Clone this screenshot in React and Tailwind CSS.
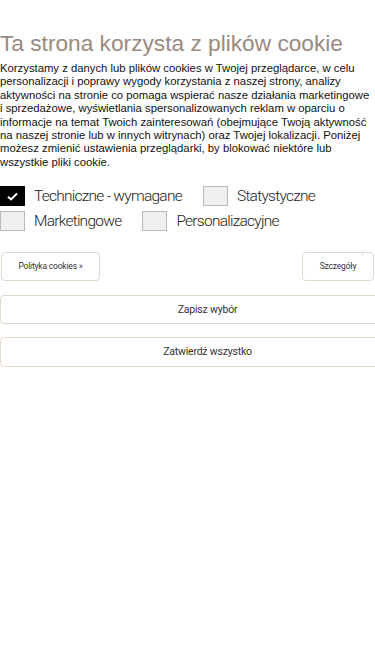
import React, { useState } from 'react';

const cond = { fontFamily: 'Roboto, "Noto Sans", sans-serif' };

const Box = ({ checked, onClick }) => (
  <button
    type="button"
    onClick={onClick}
    className={`flex h-[20px] w-[25px] shrink-0 items-center justify-center border ${
      checked ? 'border-black bg-black' : 'border-[#b9b9b9] bg-[#efefef]'
    }`}
  >
    {checked && (
      <svg viewBox="0 0 12 10" className="h-[9px] w-[11px]">
        <path d="M1 5.2 L4.4 8.3 L11 1.6" fill="none" stroke="#fff" strokeWidth="2.2" />
      </svg>
    )}
  </button>
);

const Option = ({ label, checked, onClick }) => (
  <label className="flex items-center gap-[9px] whitespace-nowrap">
    <Box checked={checked} onClick={onClick} />
    <span className="text-[15.5px] leading-none font-light tracking-[-0.75px] text-[#222]" style={cond}>{label}</span>
  </label>
);

export default function App() {
  const [opts, setOpts] = useState({ stat: false, mark: false, pers: false });
  const toggle = (k) => setOpts((p) => ({ ...p, [k]: !p[k] }));

  return (
    <div className="min-h-[667px] w-[375px] overflow-hidden bg-white" style={{ fontFamily: '"Liberation Sans", Arial, sans-serif' }}>
      <div className="pt-[30px]">
        <h1 className="text-[22.7px] leading-[26px] text-[#998a7f]">Ta strona korzysta z plików cookie</h1>
        <p className="mt-[6px] w-[370px] text-[11.3px] leading-[13.4px] text-[#111]">
          Korzystamy z danych lub plików cookies w Twojej przeglądarce, w celu personalizacji i poprawy wygody korzystania z naszej strony, analizy aktywności na stronie co pomaga wspierać nasze działania marketingowe i sprzedażowe, wyświetlania spersonalizowanych reklam w oparciu o informacje na temat Twoich zainteresowań (obejmujące Twoją aktywność na naszej stronie lub w innych witrynach) oraz Twojej lokalizacji. Poniżej możesz zmienić ustawienia przeglądarki, by blokować niektóre lub wszystkie pliki cookie.
        </p>

        <div className="mt-[17px] flex flex-col gap-[5px]">
          <div className="flex items-center gap-[21px]">
            <Option label="Techniczne - wymagane" checked />
            <Option label="Statystyczne" checked={opts.stat} onClick={() => toggle('stat')} />
          </div>
          <div className="flex items-center gap-[21px]">
            <Option label="Marketingowe" checked={opts.mark} onClick={() => toggle('mark')} />
            <Option label="Personalizacyjne" checked={opts.pers} onClick={() => toggle('pers')} />
          </div>
        </div>

        <div className="mt-[21px] flex items-center justify-between pl-[1px]">
          <button className="h-[29px] w-[99px] rounded-[4px] border border-[#e3d8ca] text-[8.5px] tracking-[-0.2px] text-[#333]" style={cond}>
            Polityka cookies »
          </button>
          <button className="relative mr-[1px] h-[29px] w-[72px] rounded-[4px] border border-[#e3d8ca] text-[8.5px] tracking-[-0.2px] text-[#333]" style={cond}>
            Szczegóły
            <span className="absolute right-[10px] top-[1px] text-[7px] leading-none text-[#777]">˅</span>
          </button>
        </div>

        <div className="mt-[14px] flex w-[415px] flex-col gap-[13px]">
          <button className="h-[29px] w-full rounded-[4px] border border-[#e3d8ca] text-[10.5px] tracking-[-0.2px] text-[#333]" style={cond}>
            Zapisz wybór
          </button>
          <button className="h-[30px] w-full rounded-[4px] border border-[#e3d8ca] text-[10.5px] tracking-[-0.2px] text-[#333]" style={cond}>
            Zatwierdź wszystko
          </button>
        </div>
      </div>
    </div>
  );
}
